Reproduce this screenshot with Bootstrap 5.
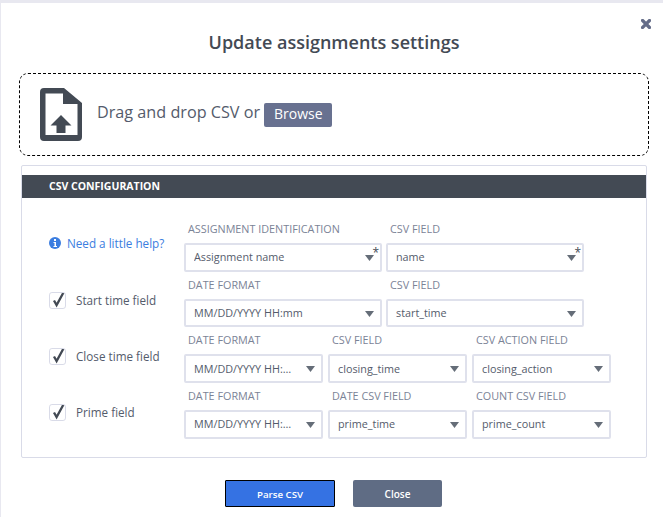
<!DOCTYPE html>
<html lang="en">

<head>
    <meta charset="UTF-8" />
    <meta name="viewport" content="width=device-width, initial-scale=1" />
    <title>Update assignments settings</title>
    <link href="https://cdn.jsdelivr.net/npm/bootstrap@5.3.0/dist/css/bootstrap.min.css" rel="stylesheet" />
    <style>
        body { background: #e8e8f0; font-family: "Open Sans", sans-serif; color: #434a54; height: 517px; overflow: hidden; }
        .dialog-box { background: #fff; margin: 3px 0 0 1px; height: 514px; padding: 0 14px 0 18px; position: relative; }
        .close-x { position: absolute; top: 16px; right: 12px; line-height: 0; }
        .dialog-title { font-size: 18px; font-weight: 600; color: #434a54; text-align: center; margin: 0; padding-top: 27px; height: 70px; line-height: 24px; }
        .drop-area { border: 1px dashed #000; border-radius: 9px; height: 83px; padding-left: 19.500px; gap: 15.500px; }
        .drop-text { font-size: 16.2px; color: #545b6b; margin-top: -2px; }
        .btn-browse { background: #687190; color: #fff; font-size: 14px; line-height: 22px; border-radius: 2px; border: 0; padding: 0 0 2px; width: 68px; height: 24px; margin-top: 3px; }
        .csv-panel { margin: 9px 2px 0; height: 293px; border: 1px solid #d9dbe8; border-radius: 2px; padding-top: 9px; }
        .csv-panel .csv-head { background: #434a54; color: #fff; font-size: 10.500px; font-weight: 700; height: 23px; line-height: 23px; padding: 0 0 0 27px; border: 0; border-radius: 0; }
        .csv-body { padding: 18px 0 0 27px; }
        .csv-row { height: 55.67px; }
        .left-cell { width: 135px; flex: none; gap: 10px; font-size: 11.700px; color: #545b6b; }
        .check-cell { margin-top: 3px; }
        .help-link { color: #3b7de0; text-decoration: none; font-size: 11.700px; gap: 6px; margin-top: -1px; }
        .check-box { width: 17px; height: 17px; margin: 0; border: 1px solid #d9dbe8; border-radius: 1px; flex: none; }
        .check-box:checked { background-color: #fff; border-color: #d9dbe8; background-size: 17px 17px; background-image: url("data:image/svg+xml,%3Csvg xmlns='http://www.w3.org/2000/svg' viewBox='0 0 17 17'%3E%3Cpath d='M5 8.5l2.6 4.6L14.5 0.5' fill='none' stroke='%23434a54' stroke-width='2.3'/%3E%3C/svg%3E"); }
        .fields-two { display: grid; grid-template-columns: 198px 198px; column-gap: 4px; }
        .fields-three { display: grid; grid-template-columns: 139px 139px 139px; column-gap: 5px; }
        .field-label { display: block; font-size: 10.800px; color: #7b8396; height: 27px; line-height: 25px; padding-left: 4px; margin: 0; white-space: nowrap; }
        .field-wrap { position: relative; }
        .csv-select { height: 28.67px; font-size: 10.800px; color: #545b6b; padding: 0 20px 0 8px; border: 2px solid #dfe1ec; border-radius: 2px; text-overflow: ellipsis; background-size: 9px 6px; background-position: right 6px top 10px; background-image: url("data:image/svg+xml,%3Csvg xmlns='http://www.w3.org/2000/svg' viewBox='0 0 9 6'%3E%3Cpath d='M0 0h9L4.5 6z' fill='%23656d78'/%3E%3C/svg%3E"); }
        .req-mark { position: absolute; top: 4px; right: 3px; font-size: 12px; line-height: 12px; color: #434a54; }
        .btn-row { margin-top: 22px; gap: 18px; padding-right: 1px; }
        .btn-parse { background: #3572e3; border: 1px solid #000; color: #fff; font-size: 9.700px; font-weight: 600; width: 110px; height: 27px; padding: 3px 0 0; border-radius: 1px; }
        .btn-close-dlg { background: #5f6c84; border: 0; color: #fff; font-size: 10px; font-weight: 600; width: 89px; height: 27px; padding: 1px 0 0; border-radius: 2px; }
    </style>
</head>

<body>
    <div class="dialog-box">
        <a class="close-x" href="#" aria-label="Close">
            <svg width="10" height="10" viewBox="0 0 10 10"><path d="M1.5 1.5l7 7M8.5 1.5l-7 7" stroke="#656d89" stroke-width="3.300" fill="none" stroke-linecap="square" /></svg>
        </a>
        <h1 class="dialog-title">Update assignments settings</h1>

        <div class="drop-area d-flex align-items-center">
            <svg width="42" height="53" viewBox="0 0 42 53">
                <path fill-rule="evenodd" fill="#434a54" d="M4 0h20l18 15v34a4 4 0 0 1-4 4H4a4 4 0 0 1-4-4V4a4 4 0 0 1 4-4zM5.500 5.500V47h32V16H23V5.500z" />
                <path fill="#434a54" d="M21 27l10.500 10.500h-6V45h-9v-7.500h-6z" />
            </svg>
            <div class="drop-text">Drag and drop CSV or <button type="button" class="btn btn-browse">Browse</button></div>
        </div>

        <div class="card csv-panel">
            <div class="card-header csv-head">CSV CONFIGURATION</div>
            <div class="csv-body">
                <div class="csv-row d-flex align-items-center">
                    <div class="left-cell">
                        <a href="#" class="help-link d-flex align-items-center">
                            <svg width="12" height="12" viewBox="0 0 12 12"><circle cx="6" cy="6" r="6" fill="#3b7de0" /><rect x="5" y="2" width="2" height="2" fill="#fff" /><path d="M4.500 5h2.500v4h1v1H4.500V9h1V6h-1z" fill="#fff" /></svg>
                            Need a little help?
                        </a>
                    </div>
                    <div class="fields-two">
                        <div>
                            <label class="field-label">ASSIGNMENT IDENTIFICATION</label>
                            <div class="field-wrap">
                                <select class="form-select csv-select"><option>Assignment name</option></select>
                                <span class="req-mark">*</span>
                            </div>
                        </div>
                        <div>
                            <label class="field-label">CSV FIELD</label>
                            <div class="field-wrap">
                                <select class="form-select csv-select"><option>name</option></select>
                                <span class="req-mark">*</span>
                            </div>
                        </div>
                    </div>
                </div>

                <div class="csv-row d-flex align-items-center">
                    <div class="left-cell check-cell d-flex align-items-center">
                        <input class="form-check-input check-box" type="checkbox" checked />
                        <span>Start time field</span>
                    </div>
                    <div class="fields-two">
                        <div>
                            <label class="field-label">DATE FORMAT</label>
                            <select class="form-select csv-select"><option>MM/DD/YYYY HH:mm</option></select>
                        </div>
                        <div>
                            <label class="field-label">CSV FIELD</label>
                            <select class="form-select csv-select"><option>start_time</option></select>
                        </div>
                    </div>
                </div>

                <div class="csv-row d-flex align-items-center">
                    <div class="left-cell check-cell d-flex align-items-center">
                        <input class="form-check-input check-box" type="checkbox" checked />
                        <span>Close time field</span>
                    </div>
                    <div class="fields-three">
                        <div>
                            <label class="field-label">DATE FORMAT</label>
                            <select class="form-select csv-select"><option>MM/DD/YYYY HH:mm</option></select>
                        </div>
                        <div>
                            <label class="field-label">CSV FIELD</label>
                            <select class="form-select csv-select"><option>closing_time</option></select>
                        </div>
                        <div>
                            <label class="field-label">CSV ACTION FIELD</label>
                            <select class="form-select csv-select"><option>closing_action</option></select>
                        </div>
                    </div>
                </div>

                <div class="csv-row d-flex align-items-center">
                    <div class="left-cell check-cell d-flex align-items-center">
                        <input class="form-check-input check-box" type="checkbox" checked />
                        <span>Prime field</span>
                    </div>
                    <div class="fields-three">
                        <div>
                            <label class="field-label">DATE FORMAT</label>
                            <select class="form-select csv-select"><option>MM/DD/YYYY HH:mm</option></select>
                        </div>
                        <div>
                            <label class="field-label">DATE CSV FIELD</label>
                            <select class="form-select csv-select"><option>prime_time</option></select>
                        </div>
                        <div>
                            <label class="field-label">COUNT CSV FIELD</label>
                            <select class="form-select csv-select"><option>prime_count</option></select>
                        </div>
                    </div>
                </div>
            </div>
        </div>

        <div class="btn-row d-flex justify-content-center">
            <button type="button" class="btn btn-parse">Parse CSV</button>
            <button type="button" class="btn btn-close-dlg">Close</button>
        </div>
    </div>

    <script src="https://cdn.jsdelivr.net/npm/bootstrap@5.3.0/dist/js/bootstrap.bundle.min.js"></script>
</body>

</html>
